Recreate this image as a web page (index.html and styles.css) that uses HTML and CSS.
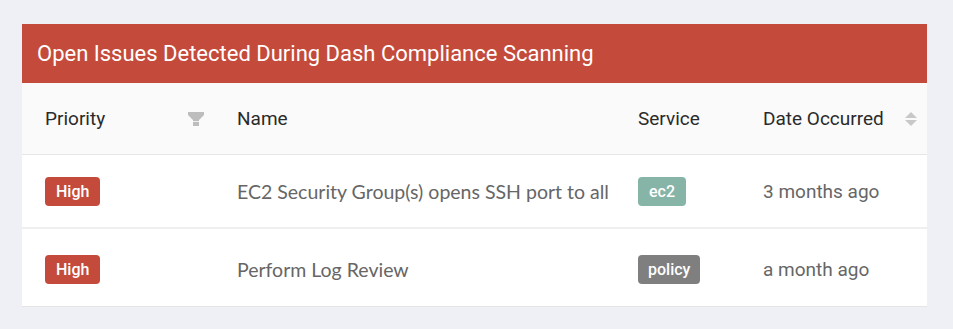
FILE: index.html
```html
<!DOCTYPE html>
<html lang="en">
<head>
    <meta charset="UTF-8">
    <title>Open Issues</title>
    <link rel="stylesheet" href="styles.css">
</head>
<body>
    <div class="panel">
        <div class="panel-heading">Open Issues Detected During Dash Compliance Scanning</div>
        <table class="issues">
            <colgroup>
                <col class="col-priority">
                <col class="col-name">
                <col class="col-service">
                <col class="col-date">
            </colgroup>
            <thead>
                <tr>
                    <th>
                        <div class="th-inner">
                            <span>Priority</span>
                            <svg class="icon" width="16" height="14" viewBox="0 0 16 14">
                                <path d="M0 0 H16 V3 L11 8 V14 H5 V8 L0 3 Z" fill="#bdbdbd"/>
                                <rect x="5" y="9" width="6" height="1" fill="#f0f0f0"/>
                            </svg>
                        </div>
                    </th>
                    <th>Name</th>
                    <th>Service</th>
                    <th>
                        <div class="th-inner">
                            <span>Date Occurred</span>
                            <svg class="icon" width="12" height="14" viewBox="0 0 12 14">
                                <path d="M6 0 L12 6 H0 Z" fill="#c8c8c8"/>
                                <path d="M0 8 H12 L6 14 Z" fill="#c8c8c8"/>
                            </svg>
                        </div>
                    </th>
                </tr>
            </thead>
            <tbody>
                <tr>
                    <td><span class="badge badge-high">High</span></td>
                    <td class="name">EC2 Security Group(s) opens SSH port to all</td>
                    <td><span class="badge badge-ec2">ec2</span></td>
                    <td class="date">3 months ago</td>
                </tr>
                <tr class="last">
                    <td><span class="badge badge-high">High</span></td>
                    <td class="name">Perform Log Review</td>
                    <td><span class="badge badge-policy">policy</span></td>
                    <td class="date">a month ago</td>
                </tr>
            </tbody>
        </table>
    </div>
</body>
</html>
```

FILE: styles.css
```css
body {
    margin: 0;
    padding: 24px 0 0 22px;
    background-color: #eff0f5;
    font-family: Roboto, "Liberation Sans", sans-serif;
}
.panel {
    width: 905px;
    background-color: white;
    border-bottom: 1px solid #e4e4e4;
}
.panel-heading {
    background-color: #c44b3b;
    color: white;
    font-size: 22px;
    height: 59px;
    line-height: 59px;
    padding-left: 15px;
}
.issues {
    width: 100%;
    border-collapse: collapse;
    table-layout: fixed;
}
.col-priority { width: 192px; }
.col-name { width: 401px; }
.col-service { width: 125px; }
.col-date { width: 187px; }
th {
    background-color: #fafafa;
    color: #2a2a2a;
    font-size: 19px;
    font-weight: 400;
    text-align: left;
    height: 71px;
    padding: 0 0 0 23px;
    border-bottom: 1px solid #e6e6e6;
}
.th-inner {
    display: flex;
    align-items: center;
    justify-content: space-between;
    padding-right: 10px;
}
.th-inner .icon {
    display: block;
}
td {
    height: 72px;
    padding: 0 0 0 23px;
    color: #666;
    font-size: 19px;
    border-bottom: 2px solid #efefef;
}
tr.last td {
    height: 73px;
    padding-top: 4px;
    border-bottom: none;
}
td.name {
    font-family: Lato, "Open Sans", sans-serif;
    font-size: 19.5px;
    color: #666;
}
.badge {
    display: inline-block;
    height: 29px;
    line-height: 29px;
    border-radius: 4px;
    color: white;
    font-size: 16px;
    font-weight: 500;
}
.badge-high {
    background-color: #c44b3b;
    padding: 0 11px;
}
.badge-ec2 {
    background-color: #86b5a8;
    padding: 0 11px;
}
.badge-policy {
    background-color: #7f7f7f;
    padding: 0 10px;
}
```
